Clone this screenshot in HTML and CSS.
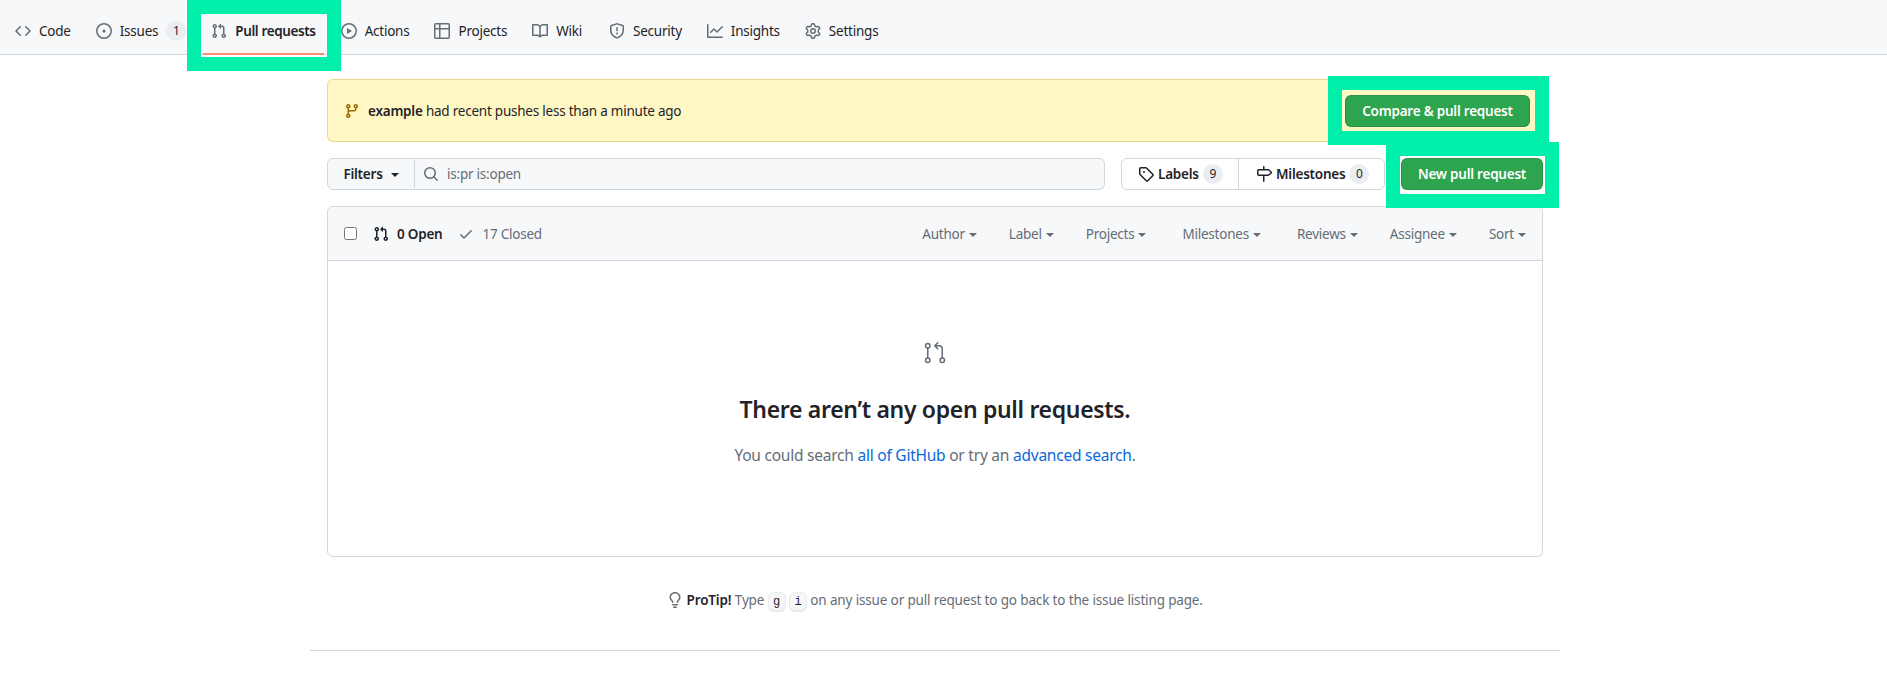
FILE: index.html
```html
<!DOCTYPE html>
<html lang="en">
<head>
    <meta charset="UTF-8">
    <meta name="viewport" content="width=device-width, initial-scale=1.0">
    <title>Pull requests</title>
    <link rel="stylesheet" href="styles.css">
</head>
<body>
    <!-- icon sprite -->
    <svg class="sprite" aria-hidden="true">
        <symbol id="i-code" viewBox="0 0 16 16"><path d="m11.28 3.22 4.25 4.25a.75.75 0 0 1 0 1.06l-4.25 4.25a.749.749 0 0 1-1.275-.326.749.749 0 0 1 .215-.734L13.94 8l-3.72-3.72a.749.749 0 0 1 .326-1.275.749.749 0 0 1 .734.215Zm-6.56 0a.751.751 0 0 1 1.042.018.751.751 0 0 1 .018 1.042L2.06 8l3.72 3.72a.749.749 0 0 1-.326 1.275.749.749 0 0 1-.734-.215L.47 8.53a.75.75 0 0 1 0-1.06Z"/></symbol>
        <symbol id="i-issue" viewBox="0 0 16 16"><path d="M8 9.5a1.5 1.5 0 1 0 0-3 1.5 1.5 0 0 0 0 3Z"/><path d="M8 0a8 8 0 1 1 0 16A8 8 0 0 1 8 0ZM1.5 8a6.5 6.5 0 1 0 13 0 6.5 6.5 0 0 0-13 0Z"/></symbol>
        <symbol id="i-pr" viewBox="0 0 16 16"><path d="M1.5 3.25a2.25 2.25 0 1 1 3 2.122v5.256a2.251 2.251 0 1 1-1.5 0V5.372A2.25 2.25 0 0 1 1.5 3.25Zm5.677-.177L9.573.677A.25.25 0 0 1 10 .854V2.5h1A2.5 2.5 0 0 1 13.5 5v5.628a2.251 2.251 0 1 1-1.5 0V5a1 1 0 0 0-1-1h-1v1.646a.25.25 0 0 1-.427.177L7.177 3.427a.25.25 0 0 1 0-.354ZM3.75 2.5a.75.75 0 1 0 0 1.5.75.75 0 0 0 0-1.5Zm0 9.5a.75.75 0 1 0 0 1.5.75.75 0 0 0 0-1.5Zm8.25.75a.75.75 0 1 0 1.5 0 .75.75 0 0 0-1.5 0Z"/></symbol>
        <symbol id="i-play" viewBox="0 0 16 16"><path d="M8 0a8 8 0 1 1 0 16A8 8 0 0 1 8 0ZM1.5 8a6.5 6.5 0 1 0 13 0 6.5 6.5 0 0 0-13 0Zm4.879-2.773 4.264 2.559a.25.25 0 0 1 0 .428l-4.264 2.559A.25.25 0 0 1 6 10.559V5.442a.25.25 0 0 1 .379-.215Z"/></symbol>
        <symbol id="i-table" viewBox="0 0 16 16"><path d="M0 1.75C0 .784.784 0 1.75 0h12.5C15.216 0 16 .784 16 1.75v12.5A1.75 1.75 0 0 1 14.25 16H1.75A1.75 1.75 0 0 1 0 14.25ZM6.5 6.5v8h7.75a.25.25 0 0 0 .25-.25V6.5Zm8-1.5V1.75a.25.25 0 0 0-.25-.25H6.5V5Zm-13 1.5v7.75c0 .138.112.25.25.25H5v-8ZM5 5V1.5H1.75a.25.25 0 0 0-.25.25V5Z"/></symbol>
        <symbol id="i-book" viewBox="0 0 16 16"><path d="M0 1.75A.75.75 0 0 1 .75 1h4.253c1.227 0 2.317.59 3 1.501A3.743 3.743 0 0 1 11.006 1h4.245a.75.75 0 0 1 .75.75v10.5a.75.75 0 0 1-.75.75h-4.507a2.25 2.25 0 0 0-1.591.659l-.622.621a.75.75 0 0 1-1.06 0l-.622-.621A2.25 2.25 0 0 0 5.258 13H.75a.75.75 0 0 1-.75-.75Zm7.251 10.324.004-5.073-.002-2.253A2.25 2.25 0 0 0 5.003 2.5H1.5v9h3.757a3.75 3.75 0 0 1 1.994.574ZM8.755 4.75l-.004 7.322a3.752 3.752 0 0 1 1.992-.572H14.5v-9h-3.495a2.25 2.25 0 0 0-2.25 2.25Z"/></symbol>
        <symbol id="i-shield" viewBox="0 0 16 16"><path d="M7.467.133a1.748 1.748 0 0 1 1.066 0l5.25 1.68A1.75 1.75 0 0 1 15 3.48V7c0 1.566-.32 3.182-1.303 4.682-.983 1.498-2.585 2.813-5.032 3.855a1.697 1.697 0 0 1-1.33 0c-2.447-1.042-4.049-2.357-5.032-3.855C1.32 10.182 1 8.566 1 7V3.48a1.75 1.75 0 0 1 1.217-1.667Zm.61 1.429a.25.25 0 0 0-.153 0l-5.25 1.68a.25.25 0 0 0-.174.238V7c0 1.358.275 2.666 1.057 3.86.784 1.194 2.121 2.34 4.366 3.297a.196.196 0 0 0 .154 0c2.245-.956 3.582-2.104 4.366-3.298C13.225 9.666 13.5 8.36 13.5 7V3.48a.25.25 0 0 0-.174-.237l-5.25-1.68ZM8.75 4.75v3a.75.75 0 0 1-1.5 0v-3a.75.75 0 0 1 1.5 0ZM9 10.5a1 1 0 1 1-2 0 1 1 0 0 1 2 0Z"/></symbol>
        <symbol id="i-graph" viewBox="0 0 16 16"><path d="M1.5 1.75V13.5h13.75a.75.75 0 0 1 0 1.5H.75a.75.75 0 0 1-.75-.75V1.75a.75.75 0 0 1 1.5 0Zm14.28 2.53-5.25 5.25a.75.75 0 0 1-1.06 0L7 7.06 4.28 9.78a.751.751 0 0 1-1.042-.018.751.751 0 0 1-.018-1.042l3.25-3.25a.75.75 0 0 1 1.06 0L10 7.94l4.72-4.72a.751.751 0 0 1 1.042.018.751.751 0 0 1 .018 1.042Z"/></symbol>
        <symbol id="i-gear" viewBox="0 0 16 16"><path d="M8 0a8.2 8.2 0 0 1 .701.031C9.444.095 9.99.645 10.16 1.29l.288 1.107c.018.066.079.158.212.224.231.114.454.243.668.386.123.082.233.09.299.071l1.103-.303c.644-.176 1.392.021 1.82.63.27.385.506.792.704 1.218.315.675.111 1.422-.364 1.891l-.814.806c-.049.048-.098.147-.088.294.016.257.016.515 0 .772-.01.147.038.246.088.294l.814.806c.475.469.679 1.216.364 1.891a7.977 7.977 0 0 1-.704 1.217c-.428.61-1.176.807-1.82.63l-1.102-.302c-.067-.019-.177-.011-.3.071a5.909 5.909 0 0 1-.668.386c-.133.066-.194.158-.211.224l-.29 1.106c-.168.646-.715 1.196-1.458 1.26a8.006 8.006 0 0 1-1.402 0c-.743-.064-1.289-.614-1.458-1.26l-.289-1.106c-.018-.066-.079-.158-.212-.224a5.738 5.738 0 0 1-.668-.386c-.123-.082-.233-.09-.299-.071l-1.103.303c-.644.176-1.392-.021-1.82-.63a8.12 8.12 0 0 1-.704-1.218c-.315-.675-.111-1.422.363-1.891l.815-.806c.05-.048.098-.147.088-.294a6.214 6.214 0 0 1 0-.772c.01-.147-.038-.246-.088-.294l-.815-.806C.635 6.045.431 5.298.746 4.623a7.92 7.92 0 0 1 .704-1.217c.428-.61 1.176-.807 1.82-.63l1.102.302c.067.019.177.011.3-.071.214-.143.437-.272.668-.386.133-.066.194-.158.211-.224l.29-1.106C6.009.645 6.556.095 7.299.03 7.53.01 7.764 0 8 0Zm-.571 1.525c-.036.003-.108.036-.137.146l-.289 1.105c-.147.561-.549.967-.998 1.189-.173.086-.34.183-.5.29-.417.278-.97.423-1.529.27l-1.103-.303c-.109-.03-.175.016-.195.045-.22.312-.412.644-.573.99-.014.031-.021.11.059.19l.815.806c.411.406.562.957.53 1.456a4.709 4.709 0 0 0 0 .582c.032.499-.119 1.05-.53 1.456l-.815.806c-.081.08-.073.159-.059.19.162.346.353.677.573.989.02.03.085.076.195.046l1.102-.303c.56-.153 1.113-.008 1.53.27.161.107.328.204.501.29.447.222.85.629.997 1.189l.289 1.105c.029.109.101.143.137.146a6.6 6.6 0 0 0 1.142 0c.036-.003.108-.036.137-.146l.289-1.105c.147-.561.549-.967.998-1.189.173-.086.34-.183.5-.29.417-.278.97-.423 1.529-.27l1.103.303c.109.029.175-.016.195-.045.22-.313.411-.644.573-.99.014-.031.021-.11-.059-.19l-.815-.806c-.411-.406-.562-.957-.53-1.456a4.709 4.709 0 0 0 0-.582c-.032-.499.119-1.05.53-1.456l.815-.806c.081-.08.073-.159.059-.19a6.464 6.464 0 0 0-.573-.989c-.02-.03-.085-.076-.195-.046l-1.102.303c-.56.153-1.113.008-1.53-.27a4.44 4.44 0 0 0-.501-.29c-.447-.222-.85-.629-.997-1.189l-.289-1.105c-.029-.11-.101-.143-.137-.146a6.6 6.6 0 0 0-1.142 0ZM11 8a3 3 0 1 1-6 0 3 3 0 0 1 6 0ZM9.5 8a1.5 1.5 0 1 0-3.001.001A1.5 1.5 0 0 0 9.5 8Z"/></symbol>
        <symbol id="i-branch" viewBox="0 0 16 16"><path d="M9.5 3.25a2.25 2.25 0 1 1 3 2.122V6A2.5 2.5 0 0 1 10 8.5H6a1 1 0 0 0-1 1v1.128a2.251 2.251 0 1 1-1.5 0V5.372a2.25 2.25 0 1 1 1.5 0v1.836A2.493 2.493 0 0 1 6 7h4a1 1 0 0 0 1-1v-.628A2.25 2.25 0 0 1 9.5 3.25Zm-6 0a.75.75 0 1 0 1.5 0 .75.75 0 0 0-1.5 0Zm8.25-.75a.75.75 0 1 0 0 1.5.75.75 0 0 0 0-1.5ZM4.25 12a.75.75 0 1 0 0 1.5.75.75 0 0 0 0-1.5Z"/></symbol>
        <symbol id="i-search" viewBox="0 0 16 16"><path d="M10.68 11.74a6 6 0 0 1-7.922-8.982 6 6 0 0 1 8.982 7.922l3.04 3.04a.749.749 0 0 1-.326 1.275.749.749 0 0 1-.734-.215ZM11.5 7a4.499 4.499 0 1 0-8.997 0A4.499 4.499 0 0 0 11.5 7Z"/></symbol>
        <symbol id="i-tag" viewBox="0 0 16 16"><path d="M1 7.775V2.75C1 1.784 1.784 1 2.75 1h5.025c.464 0 .91.184 1.238.513l6.25 6.25a1.75 1.75 0 0 1 0 2.474l-5.026 5.026a1.75 1.75 0 0 1-2.474 0l-6.25-6.25A1.752 1.752 0 0 1 1 7.775Zm1.5 0c0 .066.026.13.073.177l6.25 6.25a.25.25 0 0 0 .354 0l5.025-5.025a.25.25 0 0 0 0-.354l-6.25-6.25a.25.25 0 0 0-.177-.073H2.75a.25.25 0 0 0-.25.25ZM6 5a1 1 0 1 1 0 2 1 1 0 0 1 0-2Z"/></symbol>
        <symbol id="i-milestone" viewBox="0 0 16 16"><path d="M7.75 0a.75.75 0 0 1 .75.75V3h3.634c.414 0 .814.147 1.13.414l2.07 1.75a1.75 1.75 0 0 1 0 2.672l-2.07 1.75a1.75 1.75 0 0 1-1.13.414H8.5v5.25a.75.75 0 0 1-1.5 0V10H2.75A1.75 1.75 0 0 1 1 8.25v-3.5C1 3.784 1.784 3 2.75 3H7V.75A.75.75 0 0 1 7.75 0Zm4.384 8.5a.25.25 0 0 0 .161-.06l2.07-1.75a.248.248 0 0 0 0-.38l-2.07-1.75a.25.25 0 0 0-.161-.06H2.75a.25.25 0 0 0-.25.25v3.5c0 .138.112.25.25.25h9.384Z"/></symbol>
        <symbol id="i-check" viewBox="0 0 16 16"><path d="M13.78 4.22a.75.75 0 0 1 0 1.06l-7.25 7.25a.75.75 0 0 1-1.06 0L2.22 9.28a.751.751 0 0 1 .018-1.042.751.751 0 0 1 1.042-.018L6 10.94l6.72-6.72a.75.75 0 0 1 1.06 0Z"/></symbol>
        <symbol id="i-bulb" viewBox="0 0 16 16"><path d="M8 1.5c-2.363 0-4 1.69-4 3.75 0 .984.424 1.625.984 2.304l.214.253c.223.264.47.556.673.848.284.411.537.896.621 1.49a.75.75 0 0 1-1.484.211c-.04-.282-.163-.547-.37-.847a8.456 8.456 0 0 0-.542-.68c-.084-.1-.173-.205-.268-.32C3.201 7.75 2.5 6.766 2.5 5.25 2.5 2.31 4.863 0 8 0s5.5 2.31 5.5 5.25c0 1.516-.701 2.5-1.328 3.259-.095.115-.184.22-.268.319-.207.245-.383.453-.541.681-.208.3-.33.565-.37.847a.751.751 0 0 1-1.485-.212c.084-.593.337-1.078.621-1.489.203-.292.45-.584.673-.848.075-.088.147-.173.213-.253.561-.679.985-1.32.985-2.304 0-2.06-1.637-3.75-4-3.75ZM5.75 12h4.5a.75.75 0 0 1 0 1.5h-4.5a.75.75 0 0 1 0-1.5ZM6 15.25a.75.75 0 0 1 .75-.75h2.5a.75.75 0 0 1 0 1.5h-2.5a.75.75 0 0 1-.75-.75Z"/></symbol>
    </svg>

    <nav class="repo-nav">
        <a class="tab" href="#"><svg class="icon"><use href="#i-code"/></svg>Code</a>
        <a class="tab" href="#"><svg class="icon"><use href="#i-issue"/></svg>Issues<span class="counter">1</span></a>
        <a class="tab tab-selected" href="#"><svg class="icon"><use href="#i-pr"/></svg>Pull requests<span class="mark mark-tab"></span></a>
        <a class="tab" href="#"><svg class="icon"><use href="#i-play"/></svg>Actions</a>
        <a class="tab" href="#"><svg class="icon"><use href="#i-table"/></svg>Projects</a>
        <a class="tab tab-wiki" href="#"><svg class="icon"><use href="#i-book"/></svg>Wiki</a>
        <a class="tab" href="#"><svg class="icon"><use href="#i-shield"/></svg>Security</a>
        <a class="tab" href="#"><svg class="icon"><use href="#i-graph"/></svg>Insights</a>
        <a class="tab" href="#"><svg class="icon"><use href="#i-gear"/></svg>Settings</a>
    </nav>

    <div class="page">
        <main class="container">
            <div class="banner">
                <div class="banner-text">
                    <svg class="icon icon-branch"><use href="#i-branch"/></svg>
                    <span><strong>example</strong> had recent pushes less than a minute ago</span>
                </div>
                <a class="btn-green btn-compare" href="#">Compare &amp; pull request<span class="mark mark-compare"></span></a>
            </div>

            <div class="toolbar">
                <div class="search-group">
                    <button class="filters-btn">Filters<span class="caret"></span></button>
                    <div class="search-box">
                        <svg class="icon"><use href="#i-search"/></svg>
                        <span>is:pr is:open</span>
                    </div>
                </div>
                <div class="links-group">
                    <a class="link-item link-labels" href="#"><svg class="icon icon-dark"><use href="#i-tag"/></svg>Labels<span class="counter">9</span></a>
                    <a class="link-item link-miles" href="#"><svg class="icon icon-dark"><use href="#i-milestone"/></svg>Milestones<span class="counter">0</span></a>
                </div>
                <a class="btn-green btn-new" href="#">New pull request<span class="mark mark-new"></span></a>
            </div>

            <section class="list-box">
                <div class="list-header">
                    <span class="check-box"></span>
                    <a class="state state-open" href="#"><svg class="icon icon-dark"><use href="#i-pr"/></svg>0 Open</a>
                    <a class="state" href="#"><svg class="icon"><use href="#i-check"/></svg>17 Closed</a>
                    <div class="menus">
                        <span class="menu">Author<span class="caret"></span></span>
                        <span class="menu">Label<span class="caret"></span></span>
                        <span class="menu menu-wide">Projects<span class="caret"></span></span>
                        <span class="menu menu-wide">Milestones<span class="caret"></span></span>
                        <span class="menu">Reviews<span class="caret"></span></span>
                        <span class="menu">Assignee<span class="caret"></span></span>
                        <span class="menu">Sort<span class="caret"></span></span>
                    </div>
                </div>
                <div class="empty">
                    <svg class="empty-icon" viewBox="0 0 24 24" fill="none" stroke="#656d76" stroke-width="1.5" stroke-linecap="round" stroke-linejoin="round">
                        <circle cx="4.75" cy="4.75" r="2.25"/>
                        <circle cx="4.75" cy="19.25" r="2.25"/>
                        <circle cx="19.25" cy="19.25" r="2.25"/>
                        <path d="M4.75 7v10M19.25 17V8a3.25 3.25 0 0 0-3.25-3.25h-4M14.75 1.75l-3 3 3 3"/>
                    </svg>
                    <h2>There aren’t any open pull requests.</h2>
                    <p>You could search <a href="#">all of GitHub</a> or try an <a href="#">advanced search</a>.</p>
                </div>
            </section>

            <p class="protip">
                <svg class="icon"><use href="#i-bulb"/></svg>
                <strong>ProTip!</strong> Type <kbd>g</kbd> <kbd>i</kbd> on any issue or pull request to go back to the issue listing page.
            </p>
        </main>
        <hr class="footer-line">
    </div>
</body>
</html>
```

FILE: styles.css
```css
body {
    font-family: "Noto Sans", "Liberation Sans", sans-serif;
    font-size: 13.5px;
    letter-spacing: -0.23px;
    margin: 0;
    padding: 0;
    background-color: #fff;
    color: #1f2328;
    overflow: hidden;
}

a {
    color: inherit;
    text-decoration: none;
}

.sprite {
    display: none;
}

.icon {
    width: 16px;
    height: 16px;
    fill: #656d76;
    flex-shrink: 0;
}

.icon-dark {
    fill: #1f2328;
}

.counter {
    display: inline-block;
    min-width: 20px;
    height: 20px;
    line-height: 20px;
    text-align: center;
    font-size: 12px;
    font-weight: 400;
    border-radius: 10px;
    background-color: #eaeef2;
}

.caret {
    display: inline-block;
    margin-left: 4px;
    vertical-align: middle;
    border-top: 4px solid;
    border-left: 4px solid transparent;
    border-right: 4px solid transparent;
}

/* The green boxes are annotations drawn over the screenshot */
.mark {
    position: absolute;
    border: 14px solid #00f0ab;
    pointer-events: none;
    z-index: 2;
}

.mark-tab {
    top: 0;
    left: -16px;
    right: -17px;
    bottom: -17px;
}

.mark-compare {
    top: -20px;
    left: -18px;
    right: -20px;
    bottom: -19px;
}

.mark-new {
    top: -17px;
    left: -16px;
    right: -17px;
    bottom: -19px;
}

/* Top tabs */
.repo-nav {
    display: flex;
    box-sizing: border-box;
    height: 55px;
    padding: 8px 0 0 7px;
    background-color: #f6f8fa;
    border-bottom: 1px solid #d0d7de;
}

.tab {
    position: relative;
    display: flex;
    align-items: center;
    gap: 8px;
    padding: 0 8px;
    margin-right: 9px;
}

.tab-selected {
    font-weight: 600;
    letter-spacing: -0.38px;
    margin-top: -8px;
    padding-top: 8px;
}

.tab-selected::after {
    content: "";
    position: absolute;
    left: 0;
    right: 0;
    bottom: -1px;
    height: 2px;
    background-color: #fd8c73;
}

.tab-wiki {
    margin-right: 11px;
}

/* Page body */
.page {
    width: 1870px;
}

.container {
    width: 1216px;
    margin: 0 auto;
    padding-top: 24px;
}

.banner {
    display: flex;
    justify-content: space-between;
    align-items: center;
    box-sizing: border-box;
    height: 63px;
    padding: 0 12px 0 16px;
    margin-bottom: 16px;
    background-color: #fff8c5;
    border: 1px solid rgba(212, 167, 44, 0.4);
    border-radius: 6px;
}

.banner-text {
    display: flex;
    align-items: center;
    gap: 8px;
}

.banner-text strong {
    font-weight: 600;
}

.icon-branch {
    fill: #9a6700;
}

.btn-green {
    position: relative;
    display: flex;
    align-items: center;
    justify-content: center;
    box-sizing: border-box;
    height: 32px;
    color: #fff;
    font-weight: 600;
    background-color: #2da44e;
    border: 1px solid rgba(31, 35, 40, 0.15);
    border-radius: 6px;
}

.btn-compare {
    width: 185px;
}

.btn-new {
    width: 142px;
    margin-left: 16px;
}

.toolbar {
    display: flex;
    height: 32px;
    margin-bottom: 16px;
}

.search-group {
    display: flex;
    flex: 1;
    margin-right: 16px;
}

.filters-btn {
    width: 88px;
    font: inherit;
    font-weight: 600;
    letter-spacing: inherit;
    color: #1f2328;
    background-color: #f6f8fa;
    border: 1px solid #d0d7de;
    border-radius: 6px 0 0 6px;
    padding: 0;
}

.filters-btn .caret {
    margin-left: 8px;
}

.search-box {
    display: flex;
    flex: 1;
    align-items: center;
    gap: 8px;
    padding-left: 8px;
    color: #656d76;
    background-color: #f6f8fa;
    border: 1px solid #d0d7de;
    border-left: 0;
    border-radius: 0 6px 6px 0;
}

.links-group {
    display: flex;
    box-sizing: border-box;
    width: 264px;
    border: 1px solid #d0d7de;
    border-radius: 6px;
}

.link-item {
    display: flex;
    box-sizing: border-box;
    align-items: center;
    font-weight: 600;
    gap: 4px;
}

.link-labels {
    width: 117px;
    padding-left: 16px;
    border-right: 1px solid #d0d7de;
}

.link-miles {
    flex: 1;
    padding-left: 17px;
}

/* Pull request list */
.list-box {
    box-sizing: border-box;
    height: 351px;
    border: 1px solid #d0d7de;
    border-radius: 6px;
}

.list-header {
    display: flex;
    align-items: center;
    box-sizing: border-box;
    height: 54px;
    padding: 0 16px;
    background-color: #f6f8fa;
    border-bottom: 1px solid #d0d7de;
    border-radius: 6px 6px 0 0;
    color: #656d76;
}

.check-box {
    box-sizing: border-box;
    width: 13px;
    height: 13px;
    margin-right: 16px;
    background-color: #fff;
    border: 1px solid #767676;
    border-radius: 2.5px;
}

.state {
    display: flex;
    align-items: center;
    gap: 8px;
    margin-right: 16px;
}

.state-open {
    color: #1f2328;
    font-weight: 600;
}

.menus {
    display: flex;
    gap: 32px;
    margin-left: auto;
}

.menu-wide {
    margin-right: 4px;
}

.empty {
    display: flex;
    flex-direction: column;
    align-items: center;
    padding-top: 80px;
}

.empty-icon {
    width: 24px;
    height: 24px;
    margin-bottom: 28px;
}

.empty h2 {
    font-size: 23px;
    font-weight: 600;
    letter-spacing: -0.32px;
    margin: 0 0 19px;
}

.empty p {
    margin: 0;
    font-size: 15.5px;
    color: #656d76;
}

.empty p a {
    color: #0969da;
}

.protip {
    margin: 34px 0 0;
    text-align: center;
    letter-spacing: -0.15px;
    color: #656d76;
}

.protip .icon {
    vertical-align: -3px;
}

.protip strong {
    color: #1f2328;
    font-weight: 600;
}

kbd {
    display: inline-block;
    box-sizing: border-box;
    min-width: 18px;
    height: 20px;
    font-family: "Liberation Mono", monospace;
    font-size: 12px;
    line-height: 18px;
    text-align: center;
    letter-spacing: 0;
    color: #1f2328;
    background-color: #f6f8fa;
    border: 1px solid rgba(175, 184, 193, 0.2);
    border-radius: 6px;
    box-shadow: inset 0 -1px 0 rgba(175, 184, 193, 0.2);
}

.footer-line {
    width: 1250px;
    height: 1px;
    margin: 38px auto 0;
    border: 0;
    background-color: #d0d7de;
}
```
